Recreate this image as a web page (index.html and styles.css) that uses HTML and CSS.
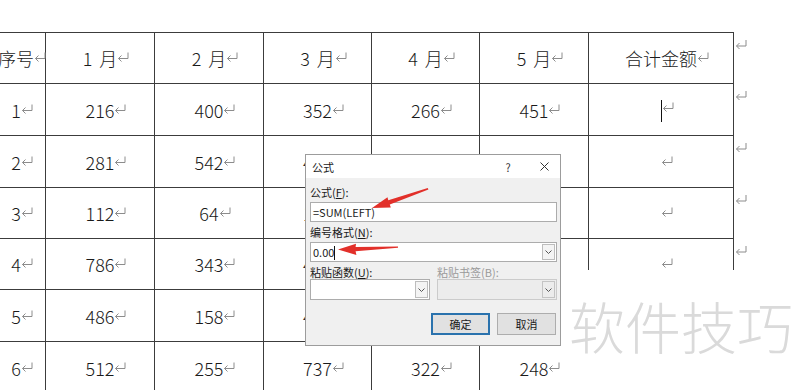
FILE: index.html
```html
<!DOCTYPE html>
<html lang="zh-CN">
<head>
<meta charset="utf-8">
<title>公式</title>
<link rel="stylesheet" href="styles.css">
</head>
<body>
<svg class="defs" width="0" height="0" aria-hidden="true">
  <symbol id="pm" viewBox="0 0 12 10">
    <path d="M11 0.5 V6.5 H1.5 M4.5 3.5 L1.5 6.5 L4.5 9.5" fill="none" stroke="#8c8c8c" stroke-width="1"/>
  </symbol>
  <symbol id="chev" viewBox="0 0 7 4">
    <path d="M0.5 0.5 L3.5 3.5 L6.5 0.5" fill="none" stroke="#555" stroke-width="1"/>
  </symbol>
</svg>

<div class="doc">
  <div class="grid">
    <div class="c"><span class="t">序号<i class="pm"><svg><use href="#pm"/></svg></i></span></div>
    <div class="c"><span class="t">1 月<i class="pm"><svg><use href="#pm"/></svg></i></span></div>
    <div class="c"><span class="t">2 月<i class="pm"><svg><use href="#pm"/></svg></i></span></div>
    <div class="c"><span class="t">3 月<i class="pm"><svg><use href="#pm"/></svg></i></span></div>
    <div class="c"><span class="t">4 月<i class="pm"><svg><use href="#pm"/></svg></i></span></div>
    <div class="c"><span class="t">5 月<i class="pm"><svg><use href="#pm"/></svg></i></span></div>
    <div class="c"><span class="t">合计金额<i class="pm"><svg><use href="#pm"/></svg></i></span></div>

    <div class="c"><span class="t">1<i class="pm"><svg><use href="#pm"/></svg></i></span></div>
    <div class="c"><span class="t">216<i class="pm"><svg><use href="#pm"/></svg></i></span></div>
    <div class="c"><span class="t">400<i class="pm"><svg><use href="#pm"/></svg></i></span></div>
    <div class="c"><span class="t">352<i class="pm"><svg><use href="#pm"/></svg></i></span></div>
    <div class="c"><span class="t">266<i class="pm"><svg><use href="#pm"/></svg></i></span></div>
    <div class="c"><span class="t">451<i class="pm"><svg><use href="#pm"/></svg></i></span></div>
    <div class="c"><span class="t"><i class="pm"><b class="caret-big"></b><svg><use href="#pm"/></svg></i></span></div>

    <div class="c"><span class="t">2<i class="pm"><svg><use href="#pm"/></svg></i></span></div>
    <div class="c"><span class="t">281<i class="pm"><svg><use href="#pm"/></svg></i></span></div>
    <div class="c"><span class="t">542<i class="pm"><svg><use href="#pm"/></svg></i></span></div>
    <div class="c"><span class="t">423<i class="pm"><svg><use href="#pm"/></svg></i></span></div>
    <div class="c"><span class="t">305<i class="pm"><svg><use href="#pm"/></svg></i></span></div>
    <div class="c"><span class="t">376<i class="pm"><svg><use href="#pm"/></svg></i></span></div>
    <div class="c"><span class="t"><i class="pm"><svg><use href="#pm"/></svg></i></span></div>

    <div class="c"><span class="t">3<i class="pm"><svg><use href="#pm"/></svg></i></span></div>
    <div class="c"><span class="t">112<i class="pm"><svg><use href="#pm"/></svg></i></span></div>
    <div class="c"><span class="t">64<i class="pm"><svg><use href="#pm"/></svg></i></span></div>
    <div class="c"><span class="t">125<i class="pm"><svg><use href="#pm"/></svg></i></span></div>
    <div class="c"><span class="t">219<i class="pm"><svg><use href="#pm"/></svg></i></span></div>
    <div class="c"><span class="t">330<i class="pm"><svg><use href="#pm"/></svg></i></span></div>
    <div class="c"><span class="t"><i class="pm"><svg><use href="#pm"/></svg></i></span></div>

    <div class="c"><span class="t">4<i class="pm"><svg><use href="#pm"/></svg></i></span></div>
    <div class="c"><span class="t">786<i class="pm"><svg><use href="#pm"/></svg></i></span></div>
    <div class="c"><span class="t">343<i class="pm"><svg><use href="#pm"/></svg></i></span></div>
    <div class="c"><span class="t">456<i class="pm"><svg><use href="#pm"/></svg></i></span></div>
    <div class="c"><span class="t">287<i class="pm"><svg><use href="#pm"/></svg></i></span></div>
    <div class="c"><span class="t">193<i class="pm"><svg><use href="#pm"/></svg></i></span></div>
    <div class="c"><span class="t"><i class="pm"><svg><use href="#pm"/></svg></i></span></div>

    <div class="c"><span class="t">5<i class="pm"><svg><use href="#pm"/></svg></i></span></div>
    <div class="c"><span class="t">486<i class="pm"><svg><use href="#pm"/></svg></i></span></div>
    <div class="c"><span class="t">158<i class="pm"><svg><use href="#pm"/></svg></i></span></div>
    <div class="c"><span class="t">412<i class="pm"><svg><use href="#pm"/></svg></i></span></div>
    <div class="c"><span class="t">364<i class="pm"><svg><use href="#pm"/></svg></i></span></div>
    <div class="c"><span class="t">275<i class="pm"><svg><use href="#pm"/></svg></i></span></div>
    <div class="c"><span class="t"><i class="pm"><svg><use href="#pm"/></svg></i></span></div>

    <div class="c"><span class="t">6<i class="pm"><svg><use href="#pm"/></svg></i></span></div>
    <div class="c"><span class="t">512<i class="pm"><svg><use href="#pm"/></svg></i></span></div>
    <div class="c"><span class="t">255<i class="pm"><svg><use href="#pm"/></svg></i></span></div>
    <div class="c"><span class="t">737<i class="pm"><svg><use href="#pm"/></svg></i></span></div>
    <div class="c"><span class="t">322<i class="pm"><svg><use href="#pm"/></svg></i></span></div>
    <div class="c"><span class="t">248<i class="pm"><svg><use href="#pm"/></svg></i></span></div>
    <div class="c"><span class="t"><i class="pm"><svg><use href="#pm"/></svg></i></span></div>
  </div>
  <div class="ends">
    <div class="e"><svg><use href="#pm"/></svg></div>
    <div class="e"><svg><use href="#pm"/></svg></div>
    <div class="e"><svg><use href="#pm"/></svg></div>
    <div class="e"><svg><use href="#pm"/></svg></div>
    <div class="e"><svg><use href="#pm"/></svg></div>
    <div class="e"><svg><use href="#pm"/></svg></div>
    <div class="e"><svg><use href="#pm"/></svg></div>
  </div>
</div>

<div class="cover"><span class="wm">软件技巧</span></div>

<div class="dlg">
  <div class="dlg-title">
    <span class="dlg-name">公式</span>
    <span class="dlg-help">?</span>
    <span class="dlg-close"><svg viewBox="0 0 9 9"><path d="M0.5 0.5 L8.5 8.5 M8.5 0.5 L0.5 8.5" stroke="#333" stroke-width="1"/></svg></span>
  </div>
  <div class="dlg-body">
    <div class="lbl">公式(<u>F</u>):</div>
    <div class="field"><span class="val">=SUM(LEFT)</span></div>
    <div class="lbl">编号格式(<u>N</u>):</div>
    <div class="field combo"><span class="val">0.00<b class="caret"></b></span><span class="drop"><svg><use href="#chev"/></svg></span></div>
    <div class="pair">
      <div class="lbl">粘贴函数(<u>U</u>):</div>
      <div class="lbl dis">粘贴书签(B):</div>
    </div>
    <div class="pair tight">
      <div class="field combo"><span class="val"></span><span class="drop"><svg><use href="#chev"/></svg></span></div>
      <div class="field combo off"><span class="val"></span><span class="drop"><svg><use href="#chev"/></svg></span></div>
    </div>
    <div class="btns">
      <span class="btn def">确定</span>
      <span class="btn">取消</span>
    </div>
  </div>
</div>

<svg class="arrows" viewBox="0 0 800 390" width="800" height="390" aria-hidden="true">
  <polygon points="372,208 387.5,197.3 388.3,200.2 427.8,188 428.4,189.6 389.8,204.5 390.8,207.5" fill="#e2302a"/>
  <polygon points="338,249.5 356,243.8 355.6,247 398,246.5 398,247.7 355.6,251.2 356.4,255" fill="#e2302a"/>
</svg>
</body>
</html>
```
FILE: styles.css
```css
html, body {
  margin: 0;
  padding: 0;
  background: #fff;
}
body {
  width: 800px;
  height: 390px;
  overflow: hidden;
  position: relative;
  font-family: "Noto Sans CJK SC", "Liberation Sans", sans-serif;
  color: #111;
}
.defs {
  position: absolute;
  width: 0;
  height: 0;
}

/* document table */
.doc {
  display: flex;
  padding-top: 32px;
  margin-left: -14px;
}
.grid {
  display: grid;
  grid-template-columns: 58px 108px 108px 107px 107px 108px 144px;
  grid-template-rows: 50px 51px 51px 50px 50px 51px 51px;
  gap: 1px;
  background: #3c3c3c;
  border: 1px solid #3c3c3c;
  border-bottom: none;
}
.c {
  background: #fff;
  display: flex;
  align-items: center;
  justify-content: center;
  font-size: 18px;
  font-weight: 300;
  line-height: 22px;
  white-space: nowrap;
  word-spacing: 3px;
  color: #1a1a1a;
}
.t {
  display: inline-block;
  line-height: 22px;
}
.pm {
  display: inline-block;
  width: 0;
  white-space: nowrap;
  font-style: normal;
}
.pm svg {
  width: 12px;
  height: 10px;
  vertical-align: 4px;
  overflow: visible;
}
.caret-big {
  display: inline-block;
  width: 1px;
  height: 22px;
  background: #111;
  vertical-align: -6px;
  margin-left: 0;
}
.ends {
  display: grid;
  grid-template-rows: 50px 51px 51px 50px 50px 51px 51px;
  gap: 1px;
  padding-top: 1px;
}
.e {
  padding-top: 6px;
  padding-left: 1px;
}
.e svg {
  width: 12px;
  height: 11px;
  display: block;
}

/* white region with watermark */
.cover {
  position: absolute;
  left: 560px;
  top: 270px;
  right: 0;
  bottom: 0;
  background: #fff;
}
.wm {
  display: block;
  padding: 27px 0 0 9px;
  font-size: 56px;
  line-height: 1;
  font-weight: 300;
  color: #dadada;
  letter-spacing: 0;
  white-space: nowrap;
}

/* dialog */
.dlg {
  position: absolute;
  left: 305px;
  top: 154px;
  width: 256px;
  height: 192px;
  box-sizing: border-box;
  border: 1px solid #9c9c9c;
  background: #f0f0f0;
  font-size: 11px;
  line-height: 14px;
  color: #1a1a1a;
}
.dlg-title {
  height: 23px;
  background: #fff;
  display: flex;
  align-items: center;
  padding: 0 6px;
}
.dlg-name {
  flex: 1;
}
.dlg-help {
  width: 20px;
  text-align: center;
  font-size: 11px;
  color: #333;
}
.dlg-close {
  width: 20px;
  margin-left: 16px;
  display: flex;
  justify-content: center;
}
.dlg-close svg {
  width: 9px;
  height: 9px;
}
.dlg-body {
  padding: 0 3px 7px 4px;
}
.lbl {
  margin-top: 7px;
  height: 14px;
  white-space: nowrap;
}
.lbl + .field {
  margin-top: 3px;
}
.field + .lbl,
.field + .pair {
  margin-top: 3px;
}
.pair .lbl {
  margin-top: 0;
}
.field {
  height: 20px;
  box-sizing: border-box;
  border: 1px solid #acacac;
  background: #fff;
  display: flex;
  align-items: center;
  padding-left: 2px;
}
.val {
  flex: 1;
  white-space: nowrap;
}
.caret {
  display: inline-block;
  width: 1px;
  height: 14px;
  background: #111;
  vertical-align: -3px;
}
.combo {
  padding-right: 1px;
}
.drop {
  width: 13px;
  height: 16px;
  box-sizing: border-box;
  border: 1px solid #bdbdbd;
  background: #f4f4f4;
  display: flex;
  align-items: center;
  justify-content: center;
}
.drop svg {
  width: 7px;
  height: 4px;
}
.pair {
  display: grid;
  grid-template-columns: 1fr 1fr;
  column-gap: 7px;
}
.pair .field {
  height: 21px;
}
.pair .drop {
  height: 17px;
}
.dis {
  color: #9a9a9a;
}
.off {
  background: #ececec;
  border-color: #cbcbcb;
}
.off .drop {
  background: #ececec;
  border-color: #c4c4c4;
}
.btns {
  margin-top: 13px;
  display: flex;
  justify-content: flex-end;
  gap: 7px;
  padding-right: 1px;
}
.btn {
  width: 59px;
  height: 22px;
  box-sizing: border-box;
  border: 1px solid #adadad;
  background: #e1e1e1;
  display: flex;
  align-items: center;
  justify-content: center;
  color: #1a1a1a;
}
.btn.def {
  border: 2px solid #2a72ad;
}

.arrows {
  position: absolute;
  left: 0;
  top: 0;
  pointer-events: none;
}
```
